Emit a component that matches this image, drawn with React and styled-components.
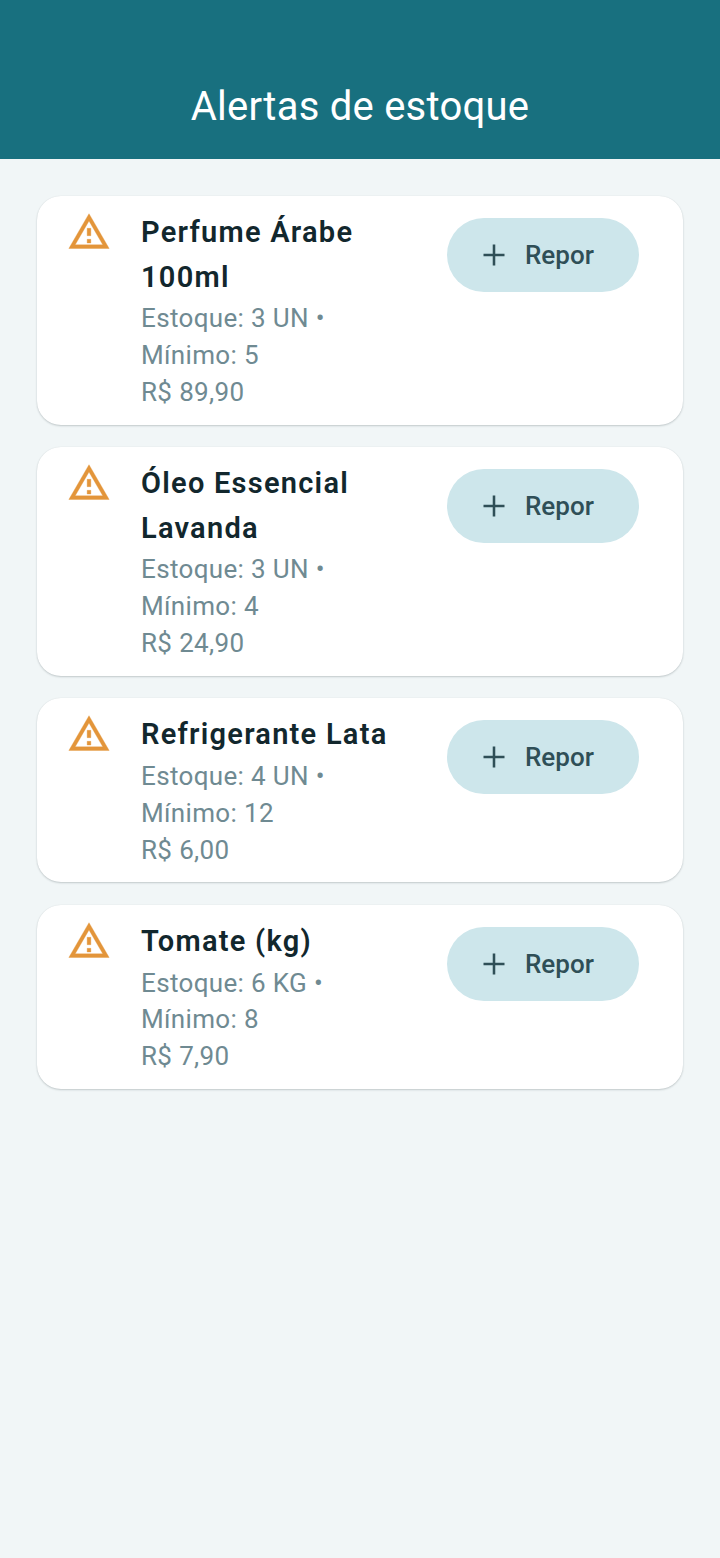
import styled, { createGlobalStyle } from "styled-components";

const GlobalStyle = createGlobalStyle`
  html, body {
    margin: 0;
    padding: 0;
    background: #f1f6f7;
    font-family: Roboto, "Liberation Sans", sans-serif;
  }
`;

const Page = styled.div`
  min-height: 1558px;
  background: #f1f6f7;
`;

const Header = styled.header`
  height: 159px;
  box-sizing: border-box;
  padding-top: 82px;
  background: #18707f;
  color: #fff;
  text-align: center;
  font-size: 40px;
  line-height: 49px;
  font-weight: 400;
  letter-spacing: 0.25px;
`;

const List = styled.div`
  display: flex;
  flex-direction: column;
  gap: 22.3px;
  padding: 37px 37px 0;
`;

const Card = styled.div`
  display: flex;
  align-items: flex-start;
  box-sizing: border-box;
  padding: 14px 44px 14px 30px;
  background: #fff;
  border-radius: 24px;
  box-shadow: 0 1px 2px rgba(30, 50, 55, 0.22), 0 0 1px rgba(30, 50, 55, 0.1);
`;

const IconSlot = styled.div`
  flex: none;
  width: 74px;
  height: 44px;
`;

const Info = styled.div`
  flex: 1;
  min-width: 0;
`;

const Name = styled.div`
  width: 270px;
  margin-bottom: 1.4px;
  font-size: 29px;
  line-height: 44.5px;
  font-weight: 600;
  letter-spacing: 1.25px;
  color: #12272d;
`;

const MetaLine = styled.div`
  font-size: 26px;
  line-height: 36.8px;
  letter-spacing: 0.35px;
  color: #6f8a92;
`;

const RestockButton = styled.button`
  flex: none;
  width: 192px;
  height: 74px;
  margin-top: 8px;
  display: flex;
  align-items: center;
  gap: 13px;
  padding: 0 0 0 29px;
  border: none;
  border-radius: 37px;
  background: #cde6eb;
  color: #2f4f57;
  font-family: inherit;
  font-size: 26px;
  font-weight: 500;
`;

const products = [
  { name: "Perfume Árabe 100ml", stock: "3 UN", min: 5, price: "89,90" },
  { name: "Óleo Essencial Lavanda", stock: "3 UN", min: 4, price: "24,90" },
  { name: "Refrigerante Lata", stock: "4 UN", min: 12, price: "6,00" },
  { name: "Tomate (kg)", stock: "6 KG", min: 8, price: "7,90" },
];

function WarningIcon() {
  return (
    <svg width="44" height="44" viewBox="0 0 24 24" fill="#e3953a" stroke="#e3953a" strokeWidth="0.2">
      <path d="M12 5.99L19.53 19H4.47L12 5.99M12 2L1 21h22L12 2zm1 14h-2v2h2v-2zm0-6h-2v4h2v-4z" />
    </svg>
  );
}

function PlusIcon() {
  return (
    <svg width="36" height="36" viewBox="0 0 24 24" fill="#2f4f57">
      <path d="M19 12.85h-6.15V19h-1.7v-6.15H5v-1.7h6.15V5h1.7v6.15H19z" />
    </svg>
  );
}

export default function App() {
  return (
    <Page>
      <GlobalStyle />
      <Header>Alertas de estoque</Header>
      <List>
        {products.map((p) => (
          <Card key={p.name}>
            <IconSlot>
              <WarningIcon />
            </IconSlot>
            <Info>
              <Name>{p.name}</Name>
              <MetaLine>Estoque: {p.stock} •</MetaLine>
              <MetaLine>Mínimo: {p.min}</MetaLine>
              <MetaLine>R$ {p.price}</MetaLine>
            </Info>
            <RestockButton>
              <PlusIcon />
              Repor
            </RestockButton>
          </Card>
        ))}
      </List>
    </Page>
  );
}
